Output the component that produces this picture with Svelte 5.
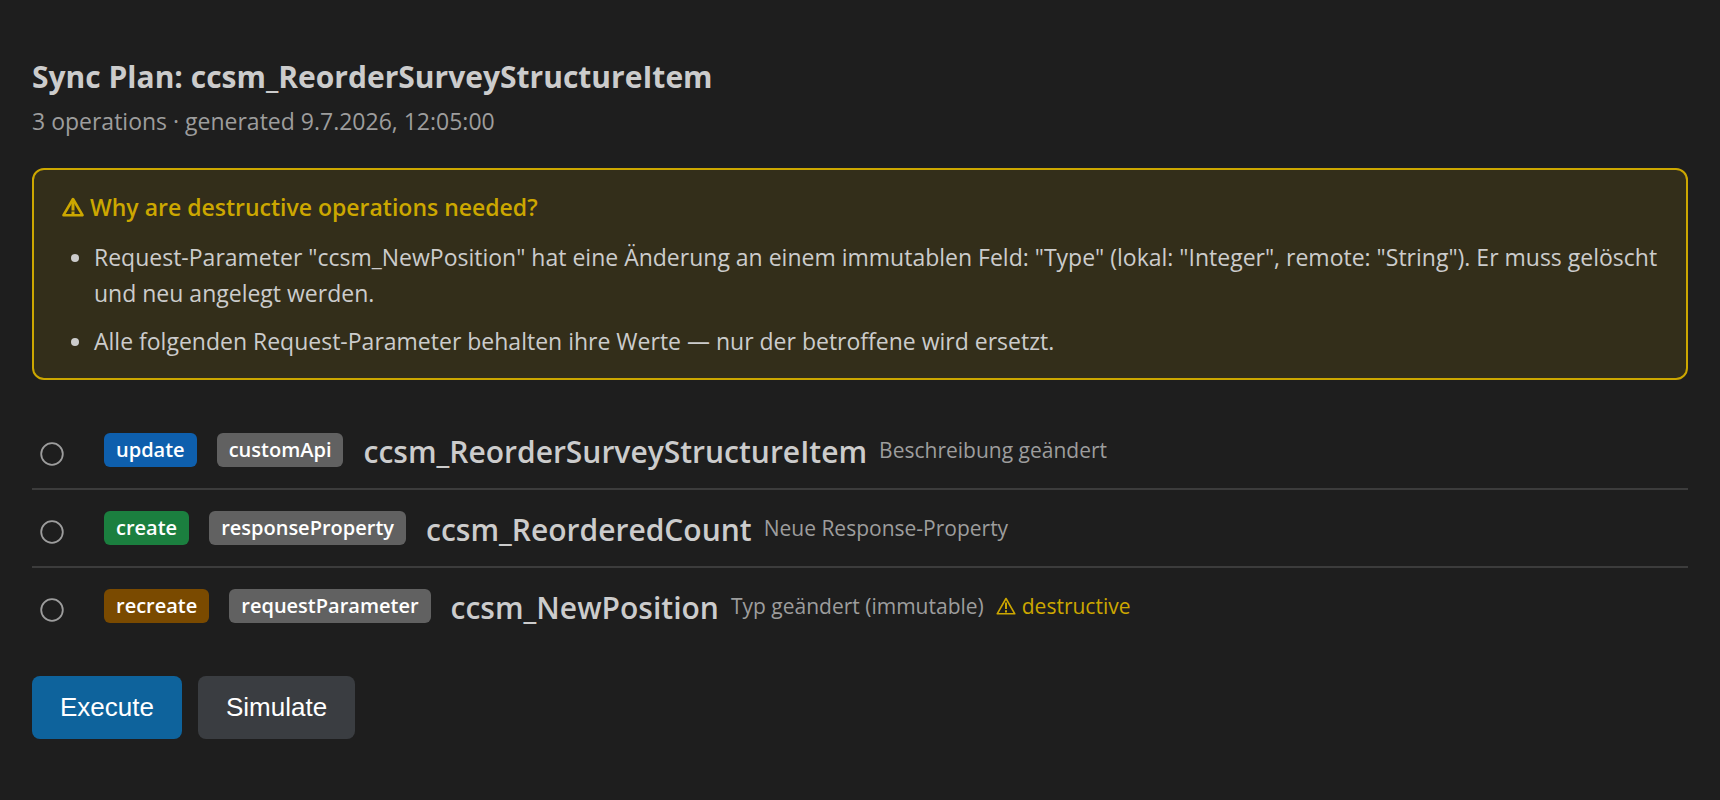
<script>
  export let title = 'ccsm_ReorderSurveyStructureItem';
  export let generated = '9.7.2026, 12:05:00';

  export let reasons = [
    'Request-Parameter "ccsm_NewPosition" hat eine Änderung an einem immutablen Feld: "Type" (lokal: "Integer", remote: "String"). Er muss gelöscht und neu angelegt werden.',
    'Alle folgenden Request-Parameter behalten ihre Werte — nur der betroffene wird ersetzt.'
  ];

  export let operations = [
    { action: 'update', kind: 'customApi', name: 'ccsm_ReorderSurveyStructureItem', detail: 'Beschreibung geändert', destructive: false },
    { action: 'create', kind: 'responseProperty', name: 'ccsm_ReorderedCount', detail: 'Neue Response-Property', destructive: false },
    { action: 'recreate', kind: 'requestParameter', name: 'ccsm_NewPosition', detail: 'Typ geändert (immutable)', destructive: true }
  ];
</script>

<main>
  <h1>Sync Plan: {title}</h1>
  <p class="meta">{operations.length} operations · generated {generated}</p>

  <section class="warning">
    <h2>
      <svg class="warning-icon" viewBox="0 0 22 20" aria-hidden="true">
        <path d="M11 2 L20.5 18.2 H1.5 Z" fill="none" stroke="currentColor" stroke-width="2.6" stroke-linejoin="round" />
        <path d="M11 5 V13.5 M11 14.5 V18" fill="none" stroke="currentColor" stroke-width="3" />
      </svg>
      Why are destructive operations needed?
    </h2>
    <ul>
      {#each reasons as reason}
        <li>{reason}</li>
      {/each}
    </ul>
  </section>

  <div class="operations">
    {#each operations as op}
      <div class="operation">
        <svg class="status" viewBox="0 0 24 24" aria-hidden="true">
          <circle cx="12" cy="12" r="10.8" fill="none" stroke="currentColor" stroke-width="1.8" />
        </svg>
        <span class="badge {op.action}">{op.action}</span>
        <span class="badge">{op.kind}</span>
        <div class="description">
          <strong>{op.name}</strong>
          <span class="detail">{op.detail}</span>
          {#if op.destructive}
            <span class="destructive">
              <svg class="small-icon" viewBox="0 0 20 18" aria-hidden="true">
                <path d="M10 1.5 L18.8 16.8 H1.2 Z" fill="none" stroke="currentColor" stroke-width="1.6" stroke-linejoin="round" />
                <path d="M10 5.5 V12 M10 13.2 V15.4" fill="none" stroke="currentColor" stroke-width="2" />
              </svg>
              destructive
            </span>
          {/if}
        </div>
      </div>
    {/each}
  </div>

  <div class="actions">
    <button type="button" class="primary">Execute</button>
    <button type="button">Simulate</button>
  </div>
</main>

<style>
  :global(body) {
    background: #1e1e1e;
  }
  main {
    padding: 56px 32px 32px;
    color: #cccccc;
    font-family: 'Segoe UI', 'Open Sans', sans-serif;
    font-size: 23px;
    line-height: 36px;
  }
  h1 {
    margin: 0;
    font-size: 30px;
    font-weight: 700;
    line-height: 42px;
  }
  .meta {
    margin: 5px 0 29px;
    color: #9d9d9d;
  }
  .warning {
    padding: 19px 28px;
    border: 2px solid #cca700;
    border-radius: 12px;
    background: #332e1a;
  }
  h2 {
    display: flex;
    align-items: center;
    gap: 6px;
    margin: 0 0 14px;
    color: #cca700;
    font-size: 23px;
    font-weight: 600;
    line-height: 36px;
  }
  .warning-icon {
    width: 22px;
    height: 20px;
  }
  ul {
    margin: 0;
    padding-left: 32px;
  }
  li + li {
    margin-top: 12px;
  }
  .operations {
    margin-top: 32px;
  }
  .operation {
    display: flex;
    align-items: center;
    height: 76px;
    padding-left: 8px;
    gap: 20px;
    border-bottom: 2px solid #3c3c3c;
  }
  .operation:last-child {
    border-bottom: none;
  }
  .status {
    width: 24px;
    height: 24px;
    padding-top: 8px;
    margin-right: 20px;
    color: #9d9d9d;
  }
  .badge {
    padding: 0 12px;
    border-radius: 6px;
    background: #616161;
    color: #ffffff;
    font-size: 20px;
    font-weight: 600;
    line-height: 34px;
  }
  .update {
    background: #0e5fad;
  }
  .create {
    background: #1b7f3f;
  }
  .recreate {
    background: #7a4a00;
  }
  .description {
    display: flex;
    align-items: center;
    gap: 12px;
  }
  strong {
    padding-top: 4px;
    font-size: 30px;
    font-weight: 600;
  }
  .detail {
    color: #9d9d9d;
    font-size: 21px;
  }
  .destructive {
    display: flex;
    align-items: center;
    gap: 6px;
    color: #cca700;
    font-size: 21px;
  }
  .small-icon {
    width: 20px;
    height: 18px;
  }
  .actions {
    display: flex;
    gap: 16px;
    margin-top: 32px;
  }
  button {
    padding: 16px 28px;
    border: none;
    border-radius: 8px;
    background: #3a3d41;
    color: #ffffff;
    font-family: Arial, 'Liberation Sans', sans-serif;
    font-size: 26px;
    line-height: 31px;
    cursor: pointer;
  }
  .primary {
    background: #0e639c;
  }
</style>
